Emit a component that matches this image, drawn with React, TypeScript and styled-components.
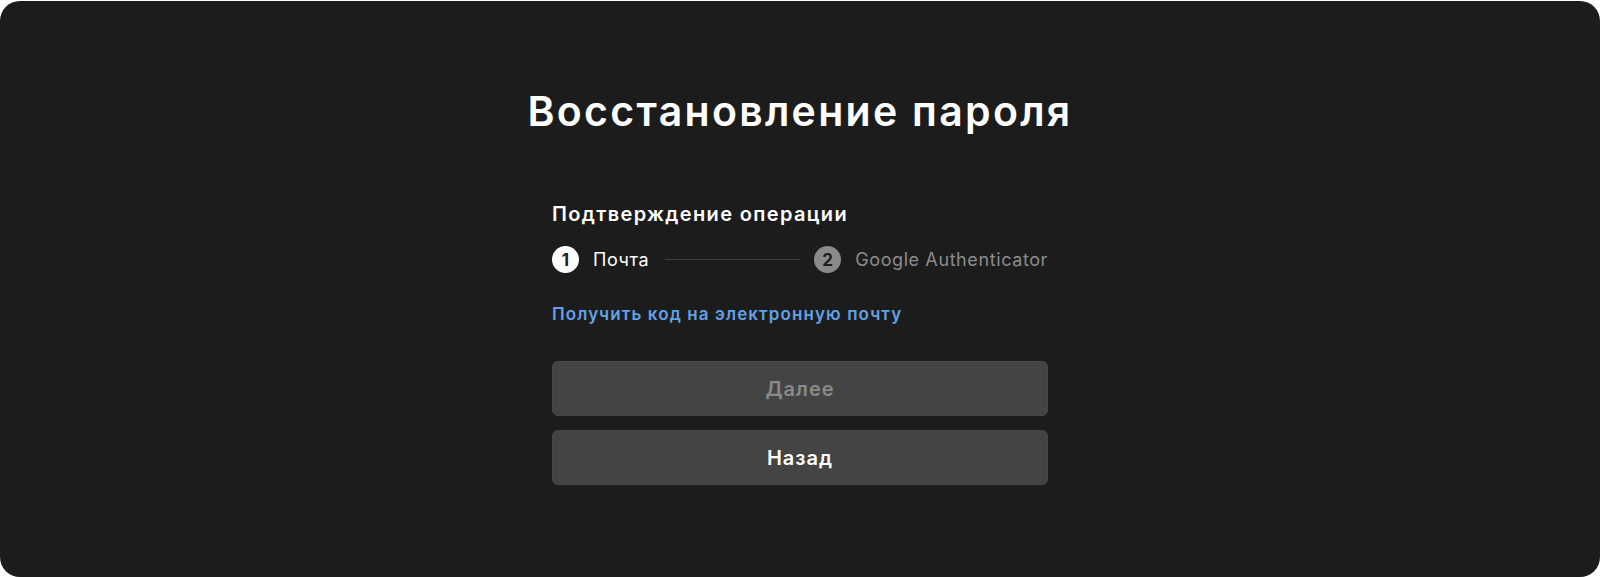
import styled, { createGlobalStyle } from "styled-components"

const GlobalStyle = createGlobalStyle`
    html, body {
        margin: 0;
        padding: 0;
        background: #ffffff;
    }
    body {
        font-family: Inter, "Noto Sans", sans-serif;
        -webkit-font-smoothing: antialiased;
    }
`

export default function App() {
    return (
        <>
            <GlobalStyle />
            <Panel>
                <Title>Восстановление пароля</Title>
                <Form>
                    <Subtitle>Подтверждение операции</Subtitle>
                    <Steps>
                        <Step>
                            <StepBadge active>1</StepBadge>
                            <StepLabel active>Почта</StepLabel>
                        </Step>
                        <StepLine />
                        <Step>
                            <StepBadge>2</StepBadge>
                            <StepLabel>Google Authenticator</StepLabel>
                        </Step>
                    </Steps>
                    <EmailLink href="#">Получить код на электронную почту</EmailLink>
                    <Buttons>
                        <Button disabled>Далее</Button>
                        <Button>Назад</Button>
                    </Buttons>
                </Form>
            </Panel>
        </>
    )
}

const Panel = styled.main`
    margin-top: 1px;
    height: 576px;
    box-sizing: border-box;
    background: #1c1c1c;
    border-radius: 20px;
    display: flex;
    flex-direction: column;
    align-items: center;
    padding-top: 86px;
`

const Title = styled.h1`
    margin: 0;
    font-size: 41px;
    line-height: 48px;
    font-weight: 600;
    color: #ffffff;
    letter-spacing: 2.3px;
`

const Form = styled.section`
    width: 496px;
    margin-top: 67px;
    display: flex;
    flex-direction: column;
`

const Subtitle = styled.h2`
    margin: 0;
    font-size: 20px;
    line-height: 24px;
    font-weight: 600;
    color: #ffffff;
    letter-spacing: 1.35px;
`

const Steps = styled.div`
    margin-top: 20px;
    display: flex;
    align-items: center;
`

const Step = styled.div`
    display: flex;
    align-items: center;
    gap: 14px;
`

const StepBadge = styled.span<{ active?: boolean }>`
    width: 27px;
    height: 27px;
    border-radius: 50%;
    display: flex;
    align-items: center;
    justify-content: center;
    font-size: 17px;
    font-weight: 700;
    color: #1c1c1c;
    background: ${({ active }) => (active ? "#ffffff" : "#8a8a8a")};
`

const StepLabel = styled.span<{ active?: boolean }>`
    font-size: 18px;
    letter-spacing: 0.6px;
    color: ${({ active }) => (active ? "#ffffff" : "#8c8c8c")};
`

const StepLine = styled.div`
    flex: 1;
    height: 1px;
    background: #3d3d3d;
    margin: 0 14px 0 16px;
`

const EmailLink = styled.a`
    margin-top: 30px;
    align-self: flex-start;
    font-size: 17px;
    line-height: 22px;
    font-weight: 600;
    color: #62a1e6;
    letter-spacing: 1.1px;
    text-decoration: none;
`

const Buttons = styled.div`
    margin-top: 36px;
    display: flex;
    flex-direction: column;
    gap: 14px;
`

const Button = styled.button`
    height: 55px;
    border: 1px solid #484848;
    border-radius: 6px;
    background: #444444;
    font-family: inherit;
    font-size: 20px;
    font-weight: 600;
    letter-spacing: 1px;
    color: #ffffff;
    cursor: pointer;

    &:disabled {
        color: #8a8a8a;
        cursor: default;
    }
`
